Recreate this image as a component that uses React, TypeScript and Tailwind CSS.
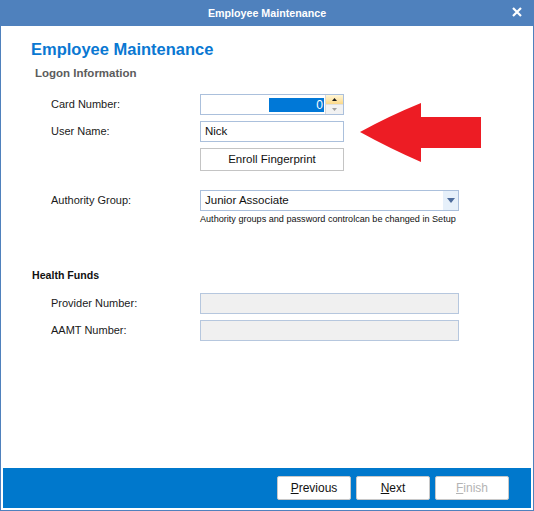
import React from 'react';

const font = { fontFamily: '"Liberation Sans", Arial, sans-serif' };

const Label: React.FC<{ text: string }> = ({ text }) => (
  <div className="w-[149px] shrink-0 text-[11px] text-[#1a1a1a]">{text}</div>
);

const WizardButton: React.FC<{ label: string; hotkey: string; disabled?: boolean }> = ({ label, hotkey, disabled }) => (
  <button
    className={`w-[74px] h-[24px] bg-white border border-[#c8c8c8] rounded-[2px] text-[12px] ${disabled ? 'text-[#b4b4b4]' : 'text-[#111]'}`}
  >
    <span className="underline underline-offset-1">{hotkey}</span>
    {label.slice(1)}
  </button>
);

const RedArrow = () => (
  <svg width="124" height="62" viewBox="0 0 124 62" className="absolute left-[359px] top-[102px]">
    <path d="M1 30 Q 30 14 62 1 L 62 15 L 122 15 L 122 46 L 62 46 L 62 60 Q 30 46 1 30 Z" fill="#ed1c24" />
  </svg>
);

export default function App() {
  return (
    <div className="w-[534px] h-[511px] flex flex-col relative bg-white" style={font}>
      <div className="h-[26px] shrink-0 bg-[#4f81bd] flex items-center justify-center relative">
        <span className="text-white font-bold text-[10.7px]">Employee Maintenance</span>
        <svg width="10" height="10" viewBox="0 0 10 10" className="absolute right-[12px] top-[7px]">
          <path d="M1 1 L9 9 M9 1 L1 9" stroke="white" strokeWidth="2.2" />
        </svg>
      </div>
      <div className="flex-1 flex flex-col border-x border-b border-[#4f81bd] px-[1px] pb-[2px]">
        <div className="flex-1 flex flex-col">
          <div className="pl-[29px] pt-[12px] text-[16.5px] font-bold text-[#0a78d2] leading-[22px]">Employee Maintenance</div>
          <div className="pl-[33px] pt-[6px] text-[11.5px] font-bold text-[#5c5c5c] leading-[14px]">Logon Information</div>

          <div className="pl-[49px] mt-[14px] flex items-center h-[21px]">
            <Label text="Card Number:" />
            <div className="w-[144px] h-[21px] border border-[#abc0dc] flex">
              <div className="flex-1 flex items-center justify-end pr-[1px]">
                <div className="w-[55px] h-[14px] bg-[#0078d7] text-white text-[12px] leading-[14px] text-right pr-[1px]">0</div>
              </div>
              <div className="w-[18px] flex flex-col border-l border-[#d8d8d8]">
                <div className="flex-1 bg-gradient-to-b from-[#fff6d8] to-[#fcd987] flex items-center justify-center">
                  <svg width="5" height="3" viewBox="0 0 5 3"><path d="M0 3 L2.5 0 L5 3 Z" fill="#1a1a1a" /></svg>
                </div>
                <div className="flex-1 bg-[#f2f2f2] border-t border-[#e0e0e0] flex items-center justify-center">
                  <svg width="5" height="3" viewBox="0 0 5 3"><path d="M0 0 L2.5 3 L5 0 Z" fill="#a0a0a0" /></svg>
                </div>
              </div>
            </div>
          </div>

          <div className="pl-[49px] mt-[6px] flex items-center h-[21px]">
            <Label text="User Name:" />
            <div className="w-[144px] h-[21px] border border-[#abc0dc] flex items-center pl-[4px] text-[11.5px] text-[#111]">Nick</div>
          </div>

          <div className="pl-[198px] mt-[4px]">
            <button className="w-[144px] h-[23px] border border-[#c4c4c4] bg-white text-[11.5px] text-[#111]">Enroll Fingerprint</button>
          </div>

          <div className="pl-[49px] mt-[19px] flex items-center h-[21px]">
            <Label text="Authority Group:" />
            <div className="w-[259px] h-[21px] border border-[#abc0dc] flex">
              <div className="flex-1 flex items-center pl-[4px] text-[11.5px] text-[#111]">Junior Associate</div>
              <div className="w-[15px] bg-[#e6f0fa] flex items-center justify-center">
                <svg width="8" height="5" viewBox="0 0 8 5"><path d="M0 0 L8 0 L4 5 Z" fill="#4d6c9c" /></svg>
              </div>
            </div>
          </div>
          <div className="pl-[198px] mt-[3px] text-[9.1px] text-[#111] leading-[11px]">Authority groups and password controlcan be changed in Setup</div>

          <div className="pl-[30px] mt-[44px] text-[10.6px] font-bold text-[#111] leading-[13px]">Health Funds</div>

          <div className="pl-[49px] mt-[11px] flex items-center h-[21px]">
            <Label text="Provider Number:" />
            <div className="w-[259px] h-[21px] border border-[#b6c7de] bg-[#f0f0f0]" />
          </div>
          <div className="pl-[49px] mt-[6px] flex items-center h-[21px]">
            <Label text="AAMT Number:" />
            <div className="w-[259px] h-[21px] border border-[#b6c7de] bg-[#f0f0f0]" />
          </div>
        </div>
        <div className="h-[40px] mx-[1px] bg-[#0078cc] flex items-center justify-end gap-[5px] pr-[22px]">
          <WizardButton label="Previous" hotkey="P" />
          <WizardButton label="Next" hotkey="N" />
          <WizardButton label="Finish" hotkey="F" disabled />
        </div>
      </div>
      <RedArrow />
    </div>
  );
}
